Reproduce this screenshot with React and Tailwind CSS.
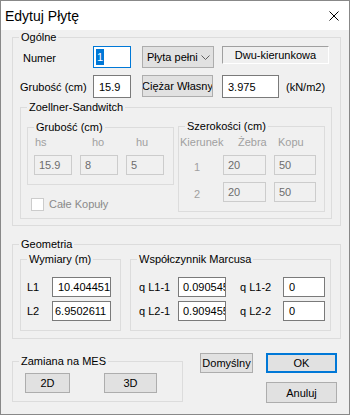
import React from 'react';

const GroupBox = ({ title, className = '', children }) => (
  <fieldset className={`border border-[#dcdcdc] ${className}`}>
    <legend className="ml-[6px] px-[2px] leading-[14px] text-black">{title}</legend>
    {children}
  </fieldset>
);

const TextBox = ({ value, className = '', disabled = false }) => (
  <div
    className={`flex items-center overflow-hidden whitespace-nowrap border ${
      disabled ? 'border-[#cccccc] bg-[#f0f0f0] text-[#6d6d6d]' : 'border-[#7a7a7a] bg-white text-black'
    } ${className}`}
  >
    {value}
  </div>
);

const Button = ({ label, className = '' }) => (
  <div
    className={`flex items-center justify-center overflow-hidden whitespace-nowrap border bg-[#e1e1e1] ${className}`}
  >
    {label}
  </div>
);

export default function App() {
  return (
    <div className="flex h-[415px] w-[350px] flex-col border border-[#888888] bg-[#f0f0f0] font-['Liberation_Sans',Arial,sans-serif] text-[11px] leading-[14px] text-black">
      {/* Title bar */}
      <div className="flex h-[29px] items-center justify-between bg-white pl-[4px] pr-[10px]">
        <span className="text-[14px]">Edytuj Płytę</span>
        <svg width="10" height="10" viewBox="0 0 10 10">
          <path d="M0.5 0.5 L9.5 9.5 M9.5 0.5 L0.5 9.5" stroke="#000" strokeWidth="1" />
        </svg>
      </div>

      {/* Ogólne */}
      <GroupBox title="Ogólne" className="ml-[11px] h-[196px] w-[329px]">
        <div className="mt-[2px] flex items-start">
          <span className="ml-[10px] w-[70px] pt-[5px]">Numer</span>
          <div className="flex h-[22px] w-[38px] items-center border border-[#0078d7] bg-white pl-[2px]">
            <span className="bg-[#0078d7] px-[1px] leading-[16px] text-white">1</span>
          </div>
          <div className="ml-[11px] flex h-[22px] w-[72px] items-center border border-[#adadad] bg-[#e1e1e1] pl-[4px] pr-[3px]">
            <span className="flex-1 overflow-hidden whitespace-nowrap">Płyta pełni</span>
            <svg width="9" height="5" viewBox="0 0 9 5" className="ml-[2px] shrink-0">
              <polyline points="0.5,0.5 4.5,4.5 8.5,0.5" fill="none" stroke="#606060" strokeWidth="1" />
            </svg>
          </div>
          <div className="ml-[8px] flex h-[18px] w-[107px] items-center justify-center border border-b-white border-l-[#a0a0a0] border-r-white border-t-[#a0a0a0]">
            Dwu-kierunkowa
          </div>
        </div>

        <div className="mt-[7px] flex items-start">
          <span className="ml-[7px] w-[73px] pt-[5px]">Grubość (cm)</span>
          <TextBox value="15.9" className="h-[23px] w-[38px] pl-[5px]" />
          <Button label="Ciężar Własny" className="ml-[11px] h-[22px] w-[71px] border-[#adadad]" />
          <TextBox value="3.975" className="ml-[9px] h-[23px] w-[57px] pl-[5px]" />
          <span className="ml-[7px] pt-[5px]">(kN/m2)</span>
        </div>

        {/* Zoellner-Sandwitch */}
        <GroupBox title="Zoellner-Sandwitch" className="ml-[7px] mt-[2px] h-[119px] w-[312px]">
          <div className="flex items-start">
            <div className="flex flex-col">
              <GroupBox title="Grubość (cm)" className="ml-[6px] mt-[6px] h-[65px] w-[147px]">
                <div className="ml-[6px] flex gap-[8px]">
                  {[
                    ['hs', '15.9', 'pl-[1px]'],
                    ['ho', '8', 'pl-[12px]'],
                    ['hu', '5', 'pl-[10px]'],
                  ].map(([label, value, pad]) => (
                    <div key={label} className="flex w-[38px] flex-col">
                      <span className={`mt-[1px] text-[#a0a0a0] ${pad}`}>{label}</span>
                      <TextBox value={value} disabled className="mt-[6px] h-[20px] pl-[4px]" />
                    </div>
                  ))}
                </div>
              </GroupBox>
              <div className="ml-[10px] mt-[12px] flex items-center">
                <div className="h-[13px] w-[13px] border border-[#cccccc] bg-white" />
                <span className="ml-[5px] text-[#8a8a8a]">Całe Kopuły</span>
              </div>
            </div>

            <GroupBox title="Szerokości (cm)" className="ml-[4px] mt-[5px] h-[93px] w-[147px]">
              <div className="mt-[2px] flex text-[#a0a0a0]">
                <span className="w-[44px] pl-[1px]">Kierunek</span>
                <span className="w-[51px] pl-[15px]">Żebra</span>
                <span className="pl-[4px]">Kopu</span>
              </div>
              <div className="mt-[6px] flex items-center">
                <span className="w-[44px] pl-[15px] pt-[3px] text-[#a0a0a0]">1</span>
                <TextBox value="20" disabled className="h-[20px] w-[43px] pl-[4px]" />
                <TextBox value="50" disabled className="ml-[8px] h-[20px] w-[42px] pl-[4px]" />
              </div>
              <div className="mt-[7px] flex items-center">
                <span className="w-[44px] pl-[15px] pt-[3px] text-[#a0a0a0]">2</span>
                <TextBox value="20" disabled className="h-[20px] w-[43px] pl-[4px]" />
                <TextBox value="50" disabled className="ml-[8px] h-[20px] w-[42px] pl-[4px]" />
              </div>
            </GroupBox>
          </div>
        </GroupBox>
      </GroupBox>

      {/* Geometria */}
      <GroupBox title="Geometria" className="ml-[11px] mt-[11px] h-[102px] w-[329px]">
        <div className="flex items-start">
          <GroupBox title="Wymiary (m)" className="ml-[7px] mt-[1px] h-[79px] w-[101px]">
            <div className="mt-[11px] flex items-center">
              <span className="ml-[6px] w-[25px]">L1</span>
              <TextBox value="10.404451" className="h-[20px] w-[59px] pl-[5px]" />
            </div>
            <div className="mt-[4px] flex items-center">
              <span className="ml-[6px] w-[25px]">L2</span>
              <TextBox value="6.9502611" className="h-[20px] w-[59px] pl-[2px]" />
            </div>
          </GroupBox>

          <GroupBox title="Współczynnik Marcusa" className="ml-[9px] mt-[1px] h-[79px] w-[201px]">
            <div className="mt-[11px] flex items-center">
              <span className="ml-[8px] w-[39px]">q L1-1</span>
              <TextBox value="0.090545" className="h-[20px] w-[48px] pl-[4px]" />
              <span className="ml-[14px] w-[43px]">q L1-2</span>
              <TextBox value="0" className="h-[20px] w-[42px] pl-[5px]" />
            </div>
            <div className="mt-[4px] flex items-center">
              <span className="ml-[8px] w-[39px]">q L2-1</span>
              <TextBox value="0.909455" className="h-[20px] w-[48px] pl-[4px]" />
              <span className="ml-[14px] w-[43px]">q L2-2</span>
              <TextBox value="0" className="h-[20px] w-[42px] pl-[5px]" />
            </div>
          </GroupBox>
        </div>
      </GroupBox>

      {/* Bottom row */}
      <div className="flex items-start">
        <GroupBox title="Zamiana na MES" className="ml-[11px] mt-[15px] h-[48px] w-[171px]">
          <div className="mt-[5px] flex">
            <Button label="2D" className="ml-[12px] h-[20px] w-[45px] border-[#adadad]" />
            <Button label="3D" className="ml-[34px] h-[20px] w-[53px] border-[#adadad]" />
          </div>
        </GroupBox>
        <Button label="Domyślny" className="ml-[17px] mt-[14px] h-[20px] w-[53px] border-[#adadad]" />
        <div className="ml-[13px] mt-[14px] flex flex-col">
          <Button label="OK" className="h-[20px] w-[71px] border-2 border-[#0078d7]" />
          <Button label="Anuluj" className="mt-[9px] h-[21px] w-[71px] border-[#adadad]" />
        </div>
      </div>
    </div>
  );
}
